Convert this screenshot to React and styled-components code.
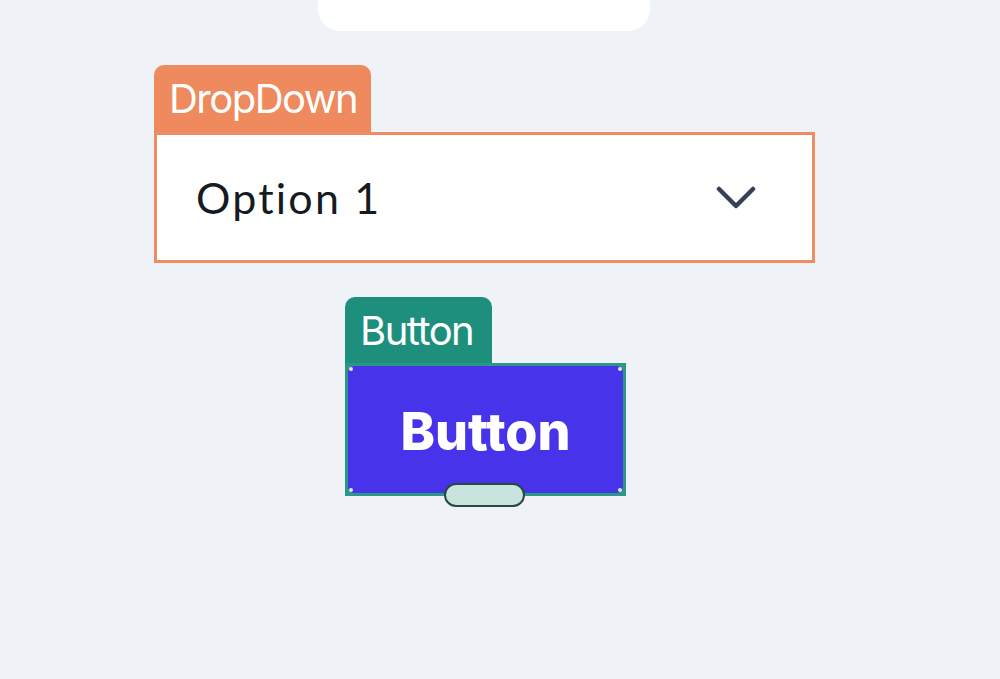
import React from "react";
import styled, { createGlobalStyle } from "styled-components";

const Global = createGlobalStyle`
  html, body { margin: 0; padding: 0; background: #eff3f8; }
  body { width: 1000px; height: 679px; overflow: hidden; font-family: "Inter", "Lato", sans-serif; }
`;

const Page = styled.div`
  display: flex;
  flex-direction: column;
  align-items: flex-start;
  width: 1000px;
  height: 679px;
`;

const TopCard = styled.div`
  width: 332px;
  height: 31px;
  margin-left: 318px;
  background: #ffffff;
  border-radius: 0 0 22px 22px;
`;

const Group = styled.div`
  display: flex;
  flex-direction: column;
  align-items: flex-start;
  margin-left: ${(p) => p.$left}px;
  margin-top: ${(p) => p.$top}px;
`;

const Tag = styled.div`
  display: flex;
  align-items: center;
  height: ${(p) => p.$h}px;
  padding: 0 0 0 ${(p) => p.$pad}px;
  box-sizing: border-box;
  background: ${(p) => p.$color};
  border-radius: 10px 10px 0 0;
  color: #ffffff;
  font-family: "Inter", sans-serif;
  font-size: 40px;
  letter-spacing: -1.5px;
  width: ${(p) => p.$w}px;
  white-space: nowrap;
  overflow: hidden;
`;

const Select = styled.div`
  display: flex;
  align-items: center;
  justify-content: space-between;
  width: 661px;
  height: 131px;
  box-sizing: border-box;
  border: 3px solid #ef8d62;
  background: #ffffff;
  padding: 0 56px 0 39px;
`;

const SelectText = styled.span`
  font-family: "Lato", sans-serif;
  font-size: 43px;
  color: #161b22;
  letter-spacing: 2.2px;
`;

const Frame = styled.div`
  position: relative;
  width: 281px;
  height: 133px;
  box-sizing: border-box;
  border: 3px solid #2a9885;
  background: #3f8fa0;
`;

const Inner = styled.div`
  display: flex;
  align-items: center;
  justify-content: center;
  width: 100%;
  height: 100%;
  background: #4733e9;
  border-radius: 6px;
  color: #ffffff;
  font-family: "Inter", sans-serif;
  font-weight: 800;
  font-size: 52px;
  letter-spacing: 0px;
  padding-top: 4px;
  box-sizing: border-box;
`;

const Dot = styled.span`
  position: absolute;
  width: 4px;
  height: 4px;
  border-radius: 50%;
  background: #d6ecf2;
  ${(p) => (p.$top ? "top: 1px;" : "bottom: 1px;")}
  ${(p) => (p.$left ? "left: 1px;" : "right: 1px;")}
`;

const Handle = styled.span`
  position: absolute;
  left: 96px;
  bottom: -14px;
  width: 81px;
  height: 24px;
  box-sizing: border-box;
  border-radius: 12px;
  background: #c8e4dd;
  border: 2px solid #284842;
`;

const Chevron = () => (
  <svg width="40" height="26" viewBox="0 0 40 26" fill="none">
    <path d="M3 4 L20 21 L37 4" stroke="#334155" strokeWidth="4.5" strokeLinecap="round" strokeLinejoin="round" />
  </svg>
);

export default function App() {
  return (
    <>
      <Global />
      <Page>
        <TopCard />
        <Group $left={154} $top={34}>
          <Tag $color="#ee8a5d" $h={67} $pad={15} $w={217}>DropDown</Tag>
          <Select>
            <SelectText>Option 1</SelectText>
            <Chevron />
          </Select>
        </Group>
        <Group $left={345} $top={34}>
          <Tag $color="#1f8f7d" $h={66} $pad={15} $w={147}>Button</Tag>
          <Frame>
            <Inner>Button</Inner>
            <Dot $top $left />
            <Dot $top />
            <Dot $left />
            <Dot />
            <Handle />
          </Frame>
        </Group>
      </Page>
    </>
  );
}
